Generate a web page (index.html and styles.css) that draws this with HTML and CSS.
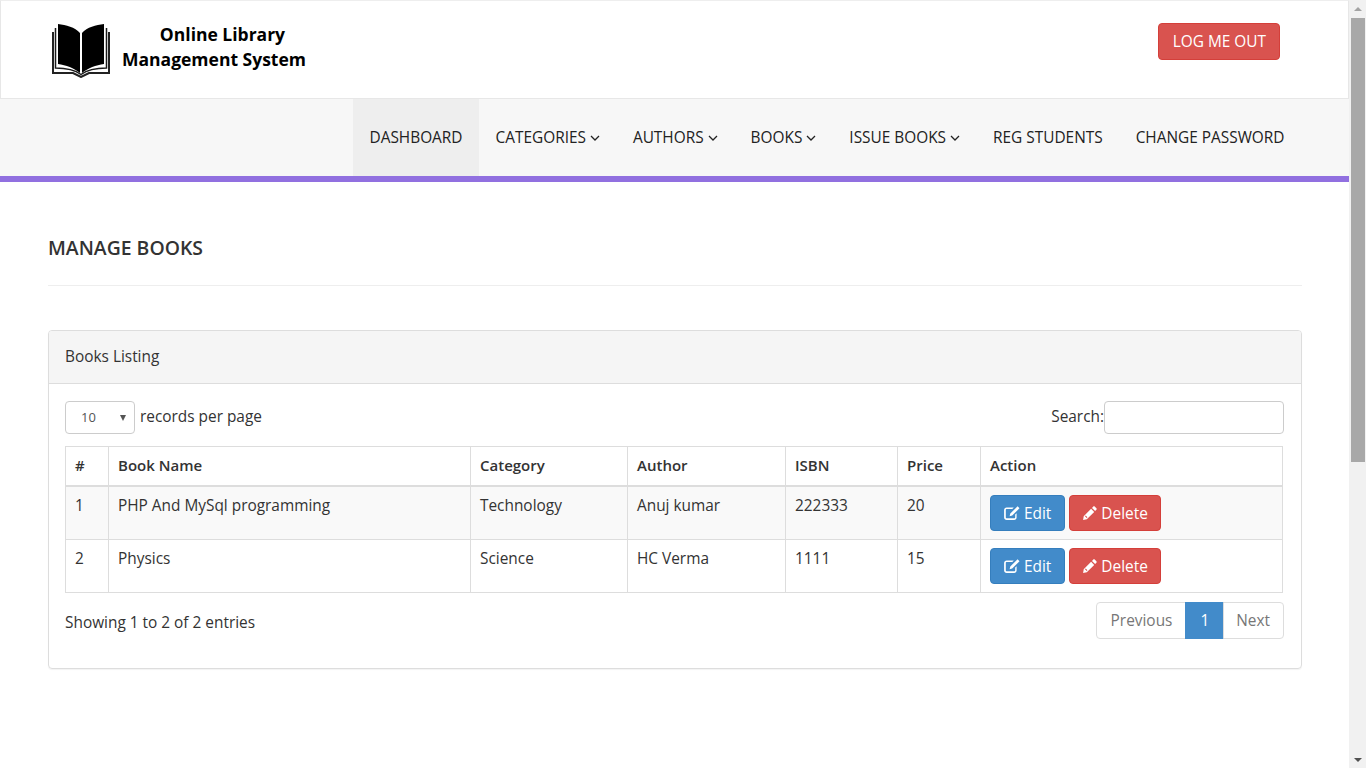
FILE: index.html
```html
<!DOCTYPE html>
<html lang="en">
  <head>
    <title>Online Library Management System | Manage Books</title>
    <meta charset="utf-8" />
    <link rel="stylesheet" href="styles.css">
  </head>

  <body>
    <div class="page">
      <header class="top-bar">
        <div class="brand">
          <svg class="brand-icon" viewBox="0 0 58 54" aria-hidden="true">
            <path fill="#000" d="M6 0 C14 1 23 3 28 9 L28 49 C22 44 14 41 6 40 Z"/>
            <path fill="#000" d="M30 9 C35 3 44 1 52 0 L52 40 C44 41 36 44 30 49 Z"/>
            <path fill="none" stroke="#1a1a1a" stroke-width="1.500" d="M3.500 4 L3.500 44 C14 44 23 46 29 50.500 C35 46 44 44 54.500 44 L54.500 4"/>
            <path fill="none" stroke="#222" stroke-width="2" d="M1 8 L1 49 L21 49 L29 53 L37 49 L57 49 L57 8"/>
          </svg>
          <div class="brand-text">
            <div class="brand-line1">Online Library</div>
            <div>Management System</div>
          </div>
        </div>
        <a class="btn btn-danger btn-logout" href="#">LOG ME OUT</a>
      </header>

      <nav class="nav-bar">
        <a class="nav-item active" href="#">DASHBOARD</a>
        <a class="nav-item" href="#">CATEGORIES <svg class="caret" viewBox="0 0 10 6"><path d="M1 1l4 4 4-4"/></svg></a>
        <a class="nav-item" href="#">AUTHORS <svg class="caret" viewBox="0 0 10 6"><path d="M1 1l4 4 4-4"/></svg></a>
        <a class="nav-item" href="#">BOOKS <svg class="caret" viewBox="0 0 10 6"><path d="M1 1l4 4 4-4"/></svg></a>
        <a class="nav-item" href="#">ISSUE BOOKS <svg class="caret" viewBox="0 0 10 6"><path d="M1 1l4 4 4-4"/></svg></a>
        <a class="nav-item" href="#">REG STUDENTS</a>
        <a class="nav-item" href="#">CHANGE PASSWORD</a>
      </nav>

      <main class="content">
        <h4 class="page-head">MANAGE BOOKS</h4>
        <hr class="rule" />

        <section class="panel">
          <div class="panel-heading">Books Listing</div>
          <div class="panel-body">
            <div class="table-tools">
              <label class="length-label">
                <span class="fake-select">10<i class="select-arrow"></i></span>
                records per page
              </label>
              <label class="search-label">Search:<span class="fake-input"></span></label>
            </div>

            <table class="books">
              <colgroup>
                <col class="c-num" /><col class="c-name" /><col class="c-cat" /><col class="c-author" />
                <col class="c-isbn" /><col class="c-price" /><col class="c-action" />
              </colgroup>
              <thead>
                <tr>
                  <th>#</th><th>Book Name</th><th>Category</th><th>Author</th><th>ISBN</th><th>Price</th><th>Action</th>
                </tr>
              </thead>
              <tbody>
                <tr class="odd">
                  <td>1</td><td>PHP And MySql programming</td><td>Technology</td><td>Anuj kumar</td><td>222333</td><td>20</td>
                  <td>
                    <a class="btn btn-primary btn-edit" href="#"><svg class="ico" viewBox="0 0 16 14"><path d="M2.600 1.500h7.200l-1.500 1.400H2.800c-.6 0-1 .4-1 1v7.400c0 .6.4 1 1 1h7.400c.6 0 1-.4 1-1V8.600l1.400-1.400v4.200c0 1.400-1.100 2.500-2.500 2.500H2.600C1.200 13.900.1 12.800.1 11.400V4C.1 2.600 1.200 1.500 2.600 1.500zM13.600.3l1.900 1.900-7.300 7.300-2.600.7.700-2.600z"/></svg> Edit</a>
                    <a class="btn btn-danger btn-delete" href="#"><svg class="ico ico-pencil" viewBox="0 0 14 14"><path d="M10.300.6c.4-.4 1-.4 1.400 0l1.700 1.700c.4.4.4 1 0 1.400l-1.300 1.300-3.100-3.100zM8.100 2.800l3.100 3.100-7.400 7.400-3.700.7.600-3.800zM2.700 9.600l-.7.700 1.700 1.700.7-.7z" fill-rule="evenodd"/></svg> Delete</a>
                  </td>
                </tr>
                <tr>
                  <td>2</td><td>Physics</td><td>Science</td><td>HC Verma</td><td>1111</td><td>15</td>
                  <td>
                    <a class="btn btn-primary btn-edit" href="#"><svg class="ico" viewBox="0 0 16 14"><path d="M2.600 1.500h7.200l-1.500 1.400H2.800c-.6 0-1 .4-1 1v7.400c0 .6.4 1 1 1h7.400c.6 0 1-.4 1-1V8.600l1.400-1.400v4.200c0 1.400-1.100 2.500-2.500 2.500H2.600C1.200 13.900.1 12.800.1 11.400V4C.1 2.600 1.200 1.500 2.600 1.500zM13.600.3l1.900 1.900-7.300 7.300-2.600.7.700-2.600z"/></svg> Edit</a>
                    <a class="btn btn-danger btn-delete" href="#"><svg class="ico ico-pencil" viewBox="0 0 14 14"><path d="M10.300.6c.4-.4 1-.4 1.400 0l1.700 1.700c.4.4.4 1 0 1.400l-1.300 1.300-3.100-3.100zM8.100 2.800l3.100 3.100-7.400 7.400-3.700.7.600-3.800zM2.700 9.600l-.7.700 1.700 1.700.7-.7z" fill-rule="evenodd"/></svg> Delete</a>
                  </td>
                </tr>
              </tbody>
            </table>

            <div class="table-foot">
              <div class="info">Showing 1 to 2 of 2 entries</div>
              <div class="pager">
                <a class="pager-item" href="#">Previous</a>
                <a class="pager-item current" href="#">1</a>
                <a class="pager-item" href="#">Next</a>
              </div>
            </div>
          </div>
        </section>
      </main>
    </div>

    <div class="scrollbar">
      <i class="arrow-up"></i>
      <div class="thumb"></div>
      <i class="arrow-down"></i>
    </div>
  </body>
</html>
```

FILE: styles.css
```css
html,
body {
  height: 100%;
  overflow: hidden;
}

body {
  margin: 0;
  display: flex;
  font-family: "Open Sans", sans-serif;
  font-size: 15.4px;
  line-height: 21px;
  color: #333;
  background: #fff;
}

a {
  text-decoration: none;
}

.page {
  flex: 1;
  min-width: 0;
}

/* top bar */
.top-bar {
  height: 97px;
  border: 1px solid #e7e7e7;
  border-top-color: #eee;
  display: flex;
  justify-content: space-between;
  align-items: flex-start;
  padding: 0 68px 0 51px;
  box-sizing: content-box;
}

.brand {
  display: flex;
  padding-top: 23px;
}

.brand-icon {
  width: 58px;
  height: 54px;
}

.brand-text {
  margin: -2px 0 0 12px;
  font-size: 17.5px;
  font-weight: 700;
  line-height: 25px;
  color: #000;
  text-align: center;
}

.brand-line1 {
  padding-left: 17px;
}

.btn {
  display: inline-block;
  padding: 6px 12px;
  border: 1px solid transparent;
  border-radius: 4px;
  color: #fff;
  font-size: 15.4px;
  line-height: 22px;
}

.btn-danger {
  background: #d9534f;
  border-color: #d43f3a;
}

.btn-primary {
  background: #428bca;
  border-color: #357ebd;
}

.btn-logout {
  margin-top: 22px;
  padding: 6px 13px 6px 14px;
  line-height: 23px;
}

/* nav */
.nav-bar {
  height: 77px;
  background: #f7f7f7;
  border-bottom: 6px solid #9170e0;
  display: flex;
  justify-content: flex-end;
  padding-right: 48px;
}

.nav-item {
  padding: 0 16.5px;
  color: #222;
  font-size: 15.4px;
  line-height: 77px;
}

.nav-item.active {
  background: #eee;
}

.caret {
  width: 10px;
  height: 6px;
  vertical-align: 2px;
  fill: none;
  stroke: #222;
  stroke-width: 1.3;
}

/* content */
.content {
  padding: 0 47px 0 48px;
}

.page-head {
  margin: 55px 0 0;
  font-size: 19.4px;
  line-height: 22px;
  font-weight: 600;
  color: #333;
}

.rule {
  margin: 26px 0 44px;
  border: 0;
  border-top: 1px solid #eee;
}

.panel {
  border: 1px solid #ddd;
  border-radius: 4px;
  box-shadow: 0 1px 1px rgba(0, 0, 0, 0.05);
}

.panel-heading {
  background: #f5f5f5;
  border-bottom: 1px solid #ddd;
  border-radius: 3px 3px 0 0;
  padding: 15px 16px 16px;
}

.panel-body {
  padding: 17px 16px 29px;
}

.table-tools {
  display: flex;
  justify-content: space-between;
  align-items: center;
  height: 33px;
  margin-bottom: 12px;
}

.length-label,
.search-label {
  display: flex;
  align-items: center;
  position: relative;
  top: -1px;
}

.fake-select {
  box-sizing: border-box;
  width: 70px;
  height: 33px;
  margin-right: 5px;
  padding-left: 15px;
  border: 1px solid #ccc;
  border-radius: 4px;
  font-size: 13px;
  line-height: 31px;
  color: #555;
  position: relative;
  top: 1px;
}

.select-arrow {
  position: absolute;
  right: 8px;
  top: 13px;
  border-left: 3px solid transparent;
  border-right: 3px solid transparent;
  border-top: 6px solid #555;
}

.fake-input {
  box-sizing: border-box;
  width: 180px;
  height: 33px;
  margin-right: 1px;
  border: 1px solid #ccc;
  border-radius: 4px;
  position: relative;
  top: 1px;
}

/* table */
.books {
  width: 1218px;
  table-layout: fixed;
  border-collapse: collapse;
}

.c-num { width: 43px; }
.c-name { width: 362px; }
.c-cat { width: 157px; }
.c-author { width: 158px; }
.c-isbn { width: 112px; }
.c-price { width: 83px; }

.books th,
.books td {
  border: 1px solid #ddd;
  padding: 8px 9px;
  text-align: left;
  vertical-align: top;
  font-size: 15.4px;
  line-height: 21px;
}

.books th {
  border-bottom-width: 2px;
  padding: 8px 9px 9px;
  font-size: 15px;
  font-weight: 600;
}

.books td {
  height: 36px;
}

.books .odd td {
  background: #f9f9f9;
}

.ico {
  width: 16px;
  height: 14px;
  fill: #fff;
  vertical-align: -1px;
}

.ico-pencil {
  width: 14px;
}

.books .btn {
  line-height: 22px;
}

.btn-edit {
  padding: 7px 13px 5px;
}

.btn-delete {
  padding: 7px 12px 5px 13px;
}

/* footer */
.table-foot {
  display: flex;
  justify-content: space-between;
  margin-top: 9px;
}

.info {
  padding-top: 10px;
}

.pager {
  display: flex;
  margin-right: 1px;
}

.pager-item {
  padding: 7px 13px;
  border: 1px solid #ddd;
  margin-left: -1px;
  color: #777;
  line-height: 21px;
  background: #fff;
}

.pager-item:first-child {
  padding-left: 14px;
  border-radius: 4px 0 0 4px;
}

.pager-item:last-child {
  padding-left: 12px;
  border-radius: 0 4px 4px 0;
}

.pager-item.current {
  background: #428bca;
  border-color: #428bca;
  color: #fff;
  padding: 7px 14px;
}

/* scrollbar drawn by hand, the page itself does not scroll */
.scrollbar {
  width: 17px;
  flex: none;
  background: #f1f1f1;
  display: flex;
  flex-direction: column;
  align-items: center;
  box-sizing: border-box;
  padding-top: 7px;
}

.arrow-up {
  border-left: 4px solid transparent;
  border-right: 4px solid transparent;
  border-bottom: 4px solid #a3a3a3;
}

.thumb {
  width: 14px;
  height: 444px;
  margin: 7px 0 0 1px;
  background: #a8a8a8;
}

.arrow-down {
  margin-top: auto;
  margin-bottom: 6px;
  border-left: 4px solid transparent;
  border-right: 4px solid transparent;
  border-top: 4px solid #505050;
}
```
